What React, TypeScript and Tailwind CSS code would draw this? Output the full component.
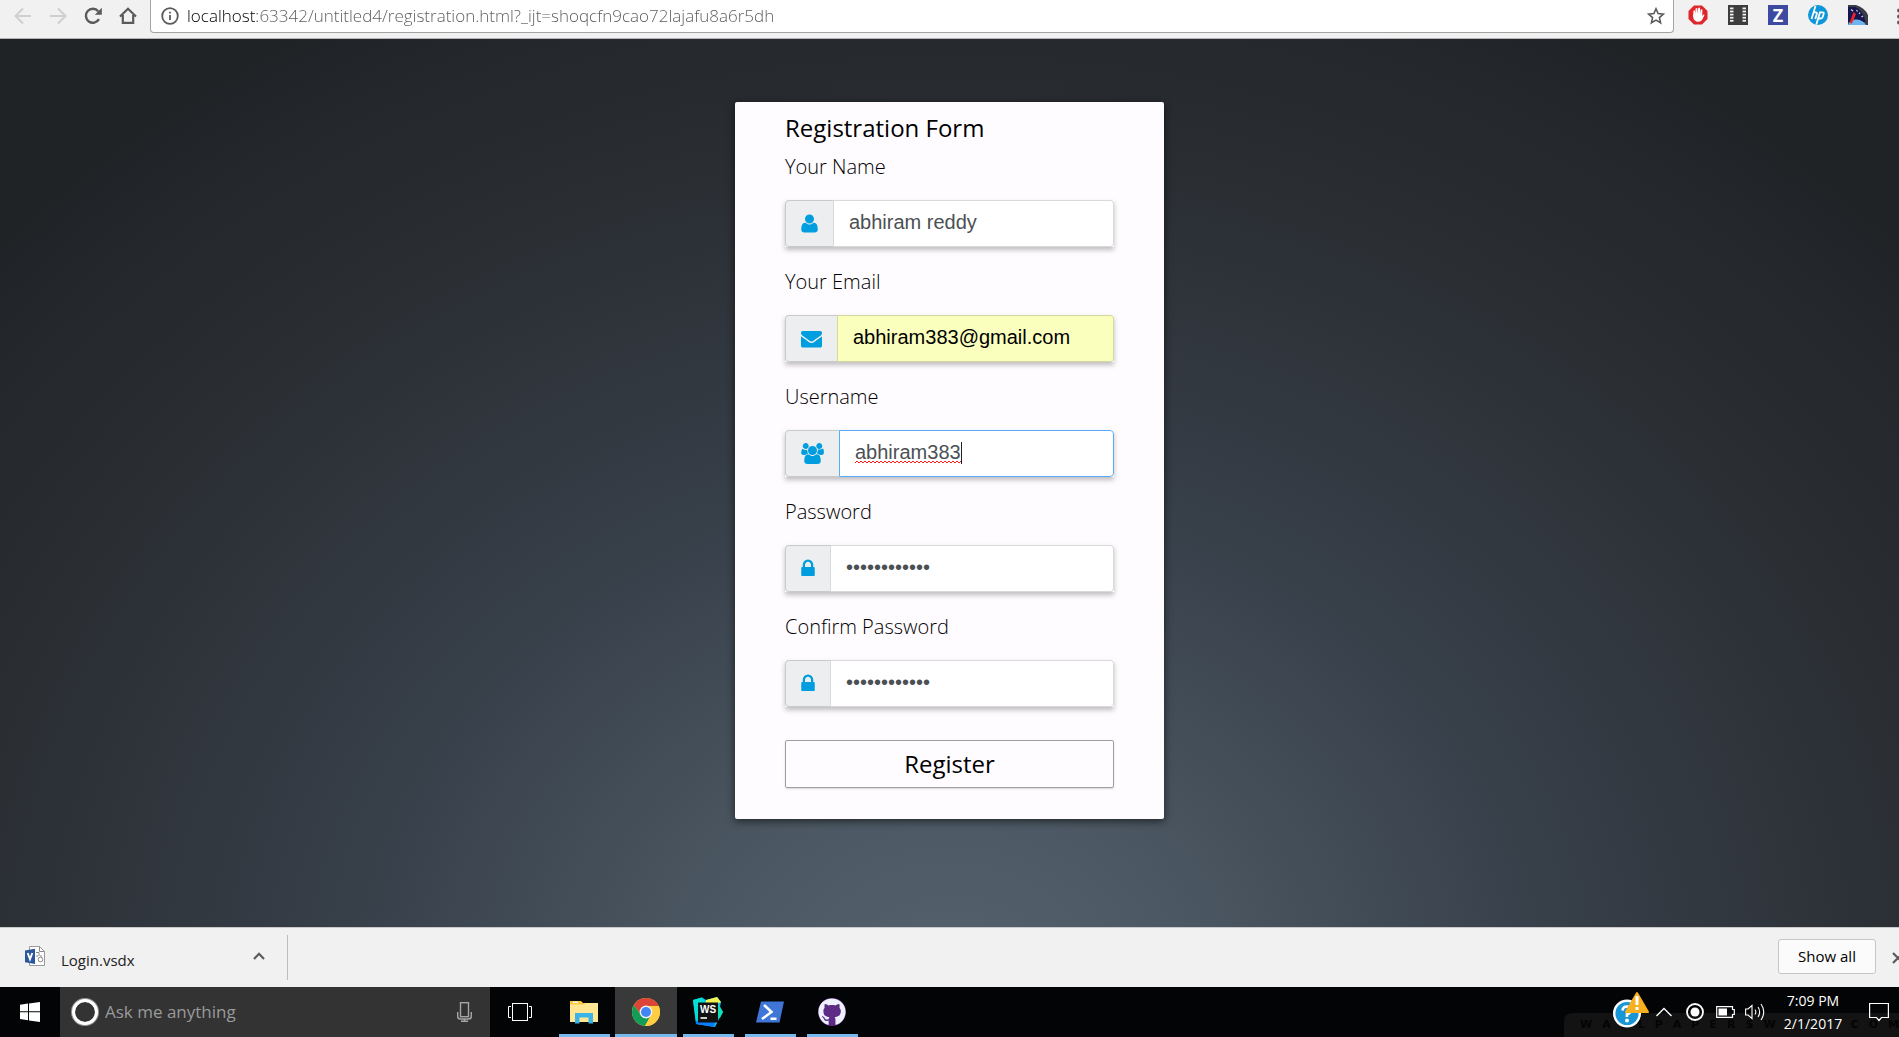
import React from "react";
import { FaGithub } from "react-icons/fa";

const ICONS = {
  user: {
    box: "192 0 1408 1792",
    size: "h-[21px] w-[17px]",
    d: "M1600 1405q0 120-73 189.5t-194 69.5h-874q-121 0-194-69.5t-73-189.5q0-53 3.5-103.5t14-109 26.5-108.5 43-97.5 62-81 85.5-53.5 111.5-20q9 0 42 21.5t74.5 48 108 48 133.5 21.5 133.5-21.5 108-48 74.5-48 42-21.5q61 0 111.5 20t85.5 53.5 62 81 43 97.5 26.5 108.5 14 109 3.5 103.5zm-320-893q0 159-112.5 271.5t-271.5 112.5-271.5-112.5-112.5-271.5 112.5-271.5 271.5-112.5 271.5 112.5 112.5 271.5z",
  },
  envelope: {
    box: "0 0 1792 1792",
    size: "h-[21px] w-[21px]",
    d: "M1792 710v794q0 66-47 113t-113 47h-1472q-66 0-113-47t-47-113v-794q44 49 101 87 362 246 497 345 57 42 92.5 65.5t94.5 48 110 24.5h2q51 0 110-24.5t94.5-48 92.5-65.5q170-123 498-345 57-39 100-87zm0-294q0 79-49 151t-122 123q-376 261-468 325-10 7-42.5 31t-54 38.5-52 32.5-57.5 27-50 9h-2q-23 0-50-9t-57.5-27-52-32.5-54-38.5-42.5-31q-91-64-262-182.5t-205-142.5q-62-42-117-115.5t-55-136.5q0-78 41.5-130t118.5-52h1472q65 0 112.5 47t47.5 113z",
  },
  users: {
    box: "64 0 1920 1792",
    size: "h-[21px] w-[23px]",
    d: "M657 896q-162 5-265 128h-134q-82 0-138-40.5t-56-118.5q0-353 124-353 6 0 43.5 21t97.5 42.5 119 21.5q67 0 133-23-5 37-5 66 0 159 93 290zm1071 637q0 120-73 189.5t-194 69.5h-874q-121 0-194-69.5t-73-189.5q0-53 3.5-103.5t14-109 26.5-108.5 43-97.5 62-81 85.5-53.5 111.5-20q10 0 43 21.5t73 48 107 48 135 21.5 135-21.5 107-48 73-48 43-21.5q61 0 111.5 20t85.5 53.5 62 81 43 97.5 26.5 108.5 14 109 3.5 103.5zm-1024-1277q0 106-75 181t-181 75-181-75-75-181 75-181 181-75 181 75 75 181zm704 384q0 159-112.5 271.5t-271.5 112.5-271.5-112.5-112.5-271.5 112.5-271.5 271.5-112.5 271.5 112.5 112.5 271.5zm576 225q0 78-56 118.5t-138 40.5h-134q-103-123-265-128 93-131 93-290 0-29-5-66 66 23 133 23 59 0 119-21.5t97.5-42.5 43.5-21q124 0 124 353zm-128-609q0 106-75 181t-181 75-181-75-75-181 75-181 181-75 181 75 75 181z",
  },
  lock: {
    box: "320 0 1152 1792",
    size: "h-[21px] w-[14px]",
    d: "M640 768h512v-192q0-106-75-181t-181-75-181 75-75 181v192zm832 96v576q0 40-28 68t-68 28h-960q-40 0-68-28t-28-68v-576q0-40 28-68t68-28h32v-192q0-184 132-316t316-132 316 132 132 316v192h32q40 0 68 28t28 68z",
  },
};

type FieldProps = {
  id: string;
  label: string;
  icon: keyof typeof ICONS;
  value: string;
  type?: string;
  look?: "plain" | "filled" | "active";
};

const LOOKS = {
  plain: "border-black/15 bg-white text-[#4b5054]",
  filled: "border-black/15 bg-[#faffbd] text-black",
  active: "border-[#5cacf5] bg-white text-[#4b5054]",
};

function Field({ id, label, icon, value, type = "text", look = "plain" }: FieldProps) {
  const i = ICONS[icon];
  return (
    <div>
      <label htmlFor={id} className="block text-xl leading-[30px] font-light text-black">
        {label}
      </label>
      <div className="mt-[18px] flex h-[47px] bg-white shadow-[0_3px_5px_rgba(0,0,0,0.25)]">
        <span className="flex items-center rounded-l border border-r-0 border-black/15 bg-[#eceeef] px-[15px] text-[#009edf]">
          <svg viewBox={i.box} className={i.size} fill="currentColor" aria-hidden="true">
            <path d={i.d} />
          </svg>
        </span>
        <div className="relative min-w-0 flex-1">
          <input
            id={id}
            type={type}
            defaultValue={value}
            spellCheck={false}
            className={`h-full w-full rounded-r border pr-3.5 pb-0.5 pl-[15px] font-['Liberation_Sans',Arial,sans-serif] text-xl outline-none ${LOOKS[look]}`}
          />
          {look === "active" && (
            <svg className="pointer-events-none absolute top-3 left-4 h-[22px] w-[108px]" viewBox="0 0 108 22" fill="none" aria-hidden="true">
              <path
                d={"M0 21" + Array.from({ length: 53 }, (_, k) => `L${k * 2 + 2} ${k % 2 ? 21 : 19}`).join("")}
                stroke="#ff1a1a"
              />
              <path d="M106.500 0V22" stroke="#222" />
            </svg>
          )}
        </div>
      </div>
    </div>
  );
}

function BrowserBar() {
  return (
    <header className="flex h-[39px] shrink-0 overflow-hidden border-b border-[#b6b4b6] bg-[#f1f1f1]">
      <nav className="flex w-[150px] shrink-0 items-start gap-[17px] pt-1.5 pl-3.5 text-[#5a5a5a]">
        <button aria-label="Back" className="text-[#cfcfcf]">
          <svg className="h-5 w-[18px]" viewBox="0 0 18 20" fill="none" stroke="currentColor" strokeWidth="2">
            <path d="M17 10H2M9 2.500L1.500 10L9 17.500" />
          </svg>
        </button>
        <button aria-label="Forward" className="text-[#cfcfcf]">
          <svg className="h-5 w-[18px]" viewBox="0 0 18 20" fill="none" stroke="currentColor" strokeWidth="2">
            <path d="M1 10H16M9 2.500L16.500 10L9 17.500" />
          </svg>
        </button>
        <button aria-label="Reload">
          <svg className="h-5 w-[18px]" viewBox="0 0 18 20" fill="none" stroke="currentColor" strokeWidth="2.400">
            <path d="M15 13.200A7 7 0 1 1 14.200 5.200" />
            <path d="M17.800 1.800V8.800H10.800Z" fill="currentColor" stroke="none" />
          </svg>
        </button>
        <button aria-label="Home">
          <svg className="h-5 w-[18px]" viewBox="0 0 18 20" fill="none" stroke="currentColor" strokeWidth="2.200">
            <path d="M1 10.500L9 2.800L17 10.500M3.800 9V16.800H14.200V9" />
          </svg>
        </button>
      </nav>
      <div className="flex h-[33px] min-w-0 flex-1 items-center rounded-b border border-t-0 border-[#a3a3a3] bg-white px-2">
        <svg className="ml-0.5 h-[18px] w-[18px] shrink-0" viewBox="0 0 18 18" fill="none" stroke="#5a5a5a" strokeWidth="1.800" aria-hidden="true">
          <circle cx="9" cy="9" r="7.800" />
          <path d="M9 8V13M9 4.700V6.600" />
        </svg>
        <input
          aria-label="Address"
          defaultValue="localhost:63342/untitled4/registration.html?_ijt=shoqcfn9cao72lajafu8a6r5dh"
          spellCheck={false}
          className="ml-2 h-full min-w-0 flex-1 bg-[linear-gradient(to_right,#000_70px,#585858_70px)] bg-clip-text pb-0.5 text-[17px] font-light text-transparent outline-none"
        />
        <button aria-label="Bookmark this page">
          <svg className="h-[18px] w-[18px]" viewBox="0 0 18 18" fill="none" stroke="#5a5a5a" strokeWidth="1.600">
            <path d="M9 1.800L11.100 6.600L16.400 7.100L12.400 10.600L13.600 15.800L9 13.100L4.400 15.800L5.600 10.600L1.600 7.100L6.900 6.600Z" />
          </svg>
        </button>
      </div>
      <div className="flex w-[225px] shrink-0 items-start gap-5 overflow-hidden pt-[5px] pl-3.5">
        <button aria-label="Ad blocker" className="shrink-0">
          <svg className="h-5 w-5" viewBox="0 0 20 20">
            <path d="M6 .5H14L19.500 6V14L14 19.500H6L.5 14V6Z" fill="#e0252b" />
            <path
              d="M5 11L5.500 5.800Q6.300 4.800 7 5.800L7.300 9.200L7.600 3.600Q8.500 2.500 9.300 3.600L9.600 8.800L10.200 3Q11.200 2 12 3L12 9L12.700 4.600Q13.700 3.800 14.400 4.800L14.200 11L15.200 9.700Q16.400 9.200 16.400 10.300L14 15Q13 16.800 10.500 16.800Q5.500 16.800 5 11Z"
              fill="#fff"
            />
          </svg>
        </button>
        <button aria-label="Film strip" className="shrink-0">
          <svg className="h-5 w-5" viewBox="0 0 20 20">
            <rect width="20" height="20" fill="#3d3d3d" />
            {[2.5, 5.6, 8.7, 11.8, 14.9].map((y) => (
              <g key={y} fill="#f1f1f1">
                <rect x="2" y={y} width="3.500" height="1.800" />
                <rect x="14.500" y={y} width="3.500" height="1.800" />
              </g>
            ))}
          </svg>
        </button>
        <button
          aria-label="Zotero"
          className="flex h-5 w-5 shrink-0 items-center justify-center bg-[#3c4ba0] font-['Open_Sans',sans-serif] text-lg leading-5 font-bold text-white"
        >
          Z
        </button>
        <button aria-label="hp" className="shrink-0">
          <svg className="h-5 w-5" viewBox="0 0 20 20" fill="none">
            <circle cx="10" cy="10" r="10" fill="#0f96d8" />
            <path
              d="M7.500 1L3.500 14M5.600 7.300H7.800Q9.300 7.300 8.800 9L7.300 14M12.300 6.500L8.300 19.500M12.300 7.300H14.700Q16.200 7.300 15.700 8.800L14.700 12Q14.200 13.500 12.700 13.500H10.500"
              stroke="#fff"
              strokeWidth="1.800"
            />
          </svg>
        </button>
        <button aria-label="Speed meter" className="shrink-0">
          <svg className="h-5 w-5" viewBox="0 0 20 20">
            <path d="M0 0H8Q17 3 20 10V20H0Z" fill="#3a3c46" />
            <path d="M0 2H7Q15 5 17.500 17H0Z" fill="#16164e" />
            <path d="M0 20Q2 14 9 14.500Q15 15 18 20Z" fill="#6bb6f0" />
            <path d="M1.500 18L5.500 7L8 9L4 18.500Z" fill="#e8262d" />
            <path d="M3 4.500L5 6M8.500 5L9.500 6.500M12 7.500L11 9M15 11L13.500 12" stroke="#d8d8f5" strokeWidth="1.200" />
          </svg>
        </button>
        <button aria-label="Menu" className="ml-2 shrink-0">
          <svg className="h-5 w-1.5" viewBox="0 0 6 20" fill="#5a5a5a">
            <circle cx="3" cy="5.500" r="2" />
            <circle cx="3" cy="11.500" r="2" />
            <circle cx="3" cy="17.500" r="2" />
          </svg>
        </button>
      </div>
    </header>
  );
}

function RegistrationForm() {
  return (
    <form
      onSubmit={(e) => e.preventDefault()}
      className="w-[429px] rounded-xs bg-[#fffcff] px-[50px] pt-2 pb-[31px] shadow-[0_2px_8px_rgba(0,0,0,0.6)]"
    >
      <h1 className="mb-1.5 text-2xl leading-9 font-normal text-black">Registration Form</h1>
      <div className="flex flex-col gap-5">
        <Field id="name" label="Your Name" icon="user" value="abhiram reddy" />
        <Field id="email" label="Your Email" icon="envelope" value="abhiram383@gmail.com" look="filled" />
        <Field id="username" label="Username" icon="users" value="abhiram383" look="active" />
        <Field id="password" label="Password" icon="lock" value="abhiram38300" type="password" />
        <Field id="confirm" label="Confirm Password" icon="lock" value="abhiram38300" type="password" />
      </div>
      <button
        type="submit"
        className="mt-[33px] block h-12 w-full rounded-xs border border-[#a0a0a0] text-2xl leading-9 text-black shadow-[0_1px_2px_rgba(0,0,0,0.15)]"
      >
        Register
      </button>
    </form>
  );
}

function DownloadBar() {
  return (
    <section className="flex h-[60px] shrink-0 items-center overflow-hidden border-t border-[#c9c9c9] bg-[#f1f1f1]">
      <button className="flex h-[45px] w-[288px] shrink-0 items-center border-r border-[#bdbdbd] pr-[22px] pl-[25px] text-left">
        <svg className="mb-1 h-5 w-5" viewBox="0 0 20 20" fill="none" aria-hidden="true">
          <path d="M4.500 .5H14.500L19.500 5.500V19.500H4.500Z" fill="#fff" stroke="#9a9a9a" />
          <path d="M14.500 .5V5.500H19.500M11 6.500H14V10M11 10H13M15 10H17" stroke="#8a8a8a" />
          <circle cx="15.500" cy="13.500" r="2.300" stroke="#8a8a8a" />
          <path d="M0 4.500L10 2.700V18L0 16.300Z" fill="#2b579a" />
          <path d="M2.700 7L5 13.300L7.300 7" stroke="#fff" strokeWidth="1.900" />
        </svg>
        <span className="mt-1.5 ml-4 flex-1 text-[15px] text-[#222]">Login.vsdx</span>
        <svg className="mb-1 h-2 w-3" viewBox="0 0 12 8" fill="none" stroke="#5a5a5a" strokeWidth="2.200" aria-hidden="true">
          <path d="M1 7L6 1.800L11 7" />
        </svg>
      </button>
      <div className="flex-1" />
      <button className="mb-0.5 h-[35px] w-[98px] shrink-0 rounded-[3px] border border-[#c6c6c6] bg-[#fbfbfb] text-[15px] text-black">
        Show all
      </button>
      <button aria-label="Close" className="ml-4 w-[7px] shrink-0 overflow-hidden">
        <svg className="h-3 w-3" viewBox="0 0 12 12" fill="none" stroke="#5a5a5a" strokeWidth="2.200">
          <path d="M1 1L11 11M11 1L1 11" />
        </svg>
      </button>
    </section>
  );
}

function TaskButton({ label, active, children }: { label: string; active?: boolean; children: React.ReactNode }) {
  return (
    <button
      aria-label={label}
      className={`flex h-full w-[62px] flex-col items-center ${active ? "bg-[#393939]" : ""}`}
    >
      <span className="flex flex-1 items-center pt-[3px]">{children}</span>
      <span className={`h-[3px] bg-[#76b9ed] ${active ? "w-full" : "w-[51px]"}`} />
    </button>
  );
}

function Taskbar() {
  return (
    <footer className="flex h-[50px] shrink-0 items-stretch overflow-hidden bg-[#030405]">
      <button aria-label="Start" className="flex w-[60px] shrink-0 items-center justify-center">
        <svg className="h-5 w-5" viewBox="0 0 20 20" fill="#fff">
          <path d="M0 2.800L8 1.600V9.300H0ZM9 1.500L20 0V9.300H9ZM0 10.300H8V18.200L0 17ZM9 10.300H20V20L9 18.400Z" />
        </svg>
      </button>
      <div className="flex w-[430px] shrink-0 items-center bg-[#333] pr-[18px] pl-[11px]">
        <svg className="h-7 w-7" viewBox="0 0 28 28" fill="none" aria-hidden="true">
          <circle cx="14" cy="14" r="12" stroke="#999" strokeWidth="4" />
          <circle cx="14" cy="14" r="11.500" stroke="#fff" strokeWidth="3" />
        </svg>
        <input
          aria-label="Search"
          placeholder="Ask me anything"
          className="ml-1.5 min-w-0 flex-1 text-[17px] placeholder-[#9a9a9a] outline-none"
        />
        <svg className="h-5 w-[15px]" viewBox="0 0 15 20" fill="none" stroke="#a6a6a6" strokeWidth="1.400" aria-hidden="true">
          <rect x="3.500" y=".7" width="8" height="14" />
          <path d="M.7 10V14.500Q.7 17 3.500 17H11.500Q14.300 17 14.300 14.500V10M7.500 17V19M4 19.200H11" />
        </svg>
      </div>
      <button aria-label="Task view" className="mr-[3px] flex w-[60px] shrink-0 items-center justify-center">
        <svg className="h-[18px] w-6" viewBox="0 0 24 18" fill="none" stroke="#fff">
          <rect x="4.500" y=".5" width="15" height="17" />
          <path d="M3 3.500H.5V14.500H3M21 3.500H23.500V14.500H21" />
        </svg>
      </button>
      <nav className="flex shrink-0">
        <TaskButton label="File Explorer">
          <svg className="h-[25px] w-7" viewBox="0 0 28 25">
            <path d="M0 1H11L13 3H28V22H0Z" fill="#fbc940" />
            <path d="M0 4.500H14L15.500 3H28V22H0Z" fill="#ffe693" />
            <path d="M3 1.700H8V3H3Z" fill="#fff" />
            <path d="M5 23.500V13H23V23.500H18.500V17.500H9.500V23.500Z" fill="#3bb5e8" />
          </svg>
        </TaskButton>
        <TaskButton label="Chrome" active>
          <svg className="h-7 w-7" viewBox="0 0 28 28">
            <circle cx="14" cy="14" r="14" fill="#fcc934" />
            <path d="M14 0A14 14 0 0 1 26.600 8H14A6 6 0 0 0 8.800 17L1.900 7A14 14 0 0 1 14 0Z" fill="#db4437" />
            <path d="M1.900 7L8.800 17A6 6 0 0 0 18.500 18L13 28A14 14 0 0 1 1.900 7Z" fill="#0f9d58" />
            <path d="M26.600 8H14A6 6 0 0 1 19.200 17L13 28A14 14 0 0 0 26.600 8Z" fill="#ffcd40" />
            <circle cx="14" cy="14" r="6.400" fill="#f1f1f1" />
            <circle cx="14" cy="14" r="5" fill="#4285f4" />
          </svg>
        </TaskButton>
        <TaskButton label="WebStorm">
          <svg className="h-[30px] w-[30px]" viewBox="0 0 30 30">
            <path d="M0 3L9 .5L13 3L24 0L28 5L27 10L30 15L27 20L22 30L3 27Z" fill="#07c3f2" />
            <path d="M0 3L9 .5L11 4L8 14L3 25Z" fill="#00e0d5" />
            <path d="M13 3L24 0L28 5L20 9L12 8Z" fill="#f3f354" />
            <path d="M26 8L30 15L27 21L22 20Z" fill="#13dfb5" />
            <path d="M3 24L22 25L21 30L3 27Z" fill="#087cfa" />
            <rect x="5" y="5.500" width="20" height="20" fill="#111" />
            <text x="15" y="15.500" textAnchor="middle" fill="#fff" fontSize="10" fontWeight="700" fontFamily="Liberation Sans, sans-serif">
              WS
            </text>
            <path d="M7.500 21H14" stroke="#fff" strokeWidth="1.600" />
          </svg>
        </TaskButton>
        <TaskButton label="PowerShell">
          <svg className="h-[22px] w-7" viewBox="0 0 28 22" fill="none">
            <path d="M5 .5H28L23.500 21.500H0Z" fill="#3f76d8" />
            <path d="M8 4L15.500 11L6 18M14.500 17.700H20.500" stroke="#fff" strokeWidth="2.500" />
          </svg>
        </TaskButton>
        <TaskButton label="GitHub">
          <span className="flex rounded-full bg-[#5b2b86] text-[28px] text-[#eef0fb]">
            <FaGithub />
          </span>
        </TaskButton>
      </nav>
      <div className="flex-1" />
      <div className="relative flex shrink-0 items-center pr-2.5 pl-[49px] text-white">
        <div
          aria-hidden="true"
          className="absolute right-0 bottom-0 left-0 flex h-6 items-center justify-between rounded-tl-lg bg-[#131313] pl-4 font-['DejaVu_Sans',sans-serif] text-[11px] font-bold text-[#040404]"
        >
          {"WALLPAPERSWIDE.COM".split("").map((c, k) => (
            <span key={k}>{c}</span>
          ))}
        </div>
        <button aria-label="Help" className="relative mr-1.5 self-start pt-1">
          <svg className="h-[37px] w-[37px]" viewBox="0 0 37 37" fill="none">
            <circle cx="14" cy="22.500" r="12.800" fill="#1a95d6" stroke="#fff" strokeWidth="2.400" />
            <path d="M9.500 19.500Q10 15.500 14 15.500Q18.500 15.800 18 19.500Q17.500 22 14 23.500V26" stroke="#fff" strokeWidth="2.700" />
            <circle cx="14" cy="29.500" r="2" fill="#fff" />
            <path d="M24 2L35 21H13Z" fill="#f9b01e" stroke="#f9b01e" strokeWidth="2" strokeLinejoin="round" />
            <path d="M24 5V14M24 16V19" stroke="#fff" strokeWidth="3" />
          </svg>
        </button>
        <button aria-label="Show hidden icons" className="relative mr-3.5">
          <svg className="h-2.5 w-4" viewBox="0 0 16 10" fill="none" stroke="#fff" strokeWidth="1.400">
            <path d="M.5 9L8 1.500L15.500 9" />
          </svg>
        </button>
        <button aria-label="Recorder" className="relative mr-3">
          <svg className="h-[18px] w-[18px]" viewBox="0 0 18 18" fill="none">
            <circle cx="9" cy="9" r="8" stroke="#fff" strokeWidth="1.800" />
            <circle cx="9" cy="9" r="4.500" fill="#fff" />
          </svg>
        </button>
        <button aria-label="Battery" className="relative mr-2.5">
          <svg className="h-3 w-[19px]" viewBox="0 0 19 12" fill="none">
            <path d="M.7 .7H16.500V3.500H18.300V8.500H16.500V11.300H.7Z" stroke="#fff" strokeWidth="1.200" />
            <rect x="2.500" y="2.500" width="8.500" height="7" fill="#fff" />
          </svg>
        </button>
        <button aria-label="Volume" className="relative mr-4">
          <svg className="h-[18px] w-5" viewBox="0 0 20 18" fill="none" stroke="#fff" strokeWidth="1.100">
            <path d="M.6 6H3L7 2.500V15.500L3 12H.6ZM10 6.500Q11.700 9 10 11.500M13 4Q16.300 9 13 14M16 1Q21.500 9 16 17" />
          </svg>
        </button>
        <div className="relative w-16 text-center text-sm leading-[23px]">
          <div>7:09 PM</div>
          <div>2/1/2017</div>
        </div>
        <button aria-label="Notifications" className="relative ml-6">
          <svg className="h-5 w-5" viewBox="0 0 20 20" fill="none" stroke="#fff" strokeWidth="1.200">
            <path d="M.6 1.500H19.400V15.500H12.500L10 18.500L7.500 15.500H.6Z" />
          </svg>
        </button>
      </div>
    </footer>
  );
}

export default function App() {
  return (
    <div className="flex min-h-screen flex-col font-['Open_Sans','Noto_Sans',sans-serif]">
      <BrowserBar />
      <main className="flex flex-1 items-start justify-center bg-[#202327] bg-[radial-gradient(ellipse_60%_110%_at_50%_108%,#56646f_0%,#4b5762_22%,#363e48_55%,#2b2f34_85%,#202326_115%)] pt-[63px] pb-10">
        <RegistrationForm />
      </main>
      <DownloadBar />
      <Taskbar />
    </div>
  );
}
